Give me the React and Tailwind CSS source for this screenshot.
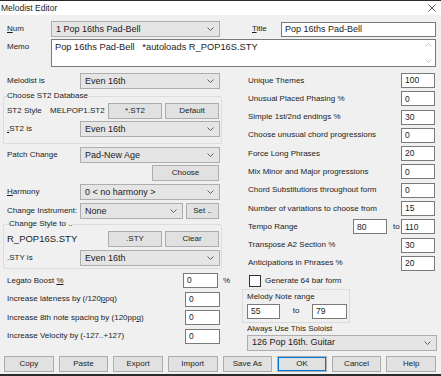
import React from 'react';

function Chevron({ up = false, color = '#606060' }) {
  return (
    <svg width="7" height="4" viewBox="0 0 7 4" className="shrink-0">
      <path d={up ? 'M0.5 3.5 L3.5 0.5 L6.5 3.5' : 'M0.5 0.5 L3.5 3.5 L6.5 0.5'} fill="none" stroke={color} strokeWidth="1" />
    </svg>
  );
}

function Combo({ value, className = '' }) {
  return (
    <div className={`flex h-[16px] items-center justify-between border border-[#adadad] bg-[#e5e5e5] pl-[4px] pr-[5px] text-[9px] leading-none ${className}`}>
      <span>{value}</span>
      <Chevron />
    </div>
  );
}

function Field({ value, className = '' }) {
  return (
    <div className={`flex h-[15px] shrink-0 items-center border border-[#7a7a7a] bg-white pl-[3px] text-[8.5px] leading-none ${className}`}>
      {value}
    </div>
  );
}

function Btn({ children, className = '' }) {
  return (
    <div className={`flex h-[16px] shrink-0 items-center justify-center border border-[#adadad] bg-[#e1e1e1] text-[8px] leading-none ${className}`}>
      {children}
    </div>
  );
}

const rightRows = [
  ['Unique Themes', '100'],
  ['Unusual Placed Phasing %', '0'],
  ['Simple 1st/2nd endings %', '30'],
  ['Choose unusual chord progressions', '0'],
  ['Force Long Phrases', '20'],
  ['Mix Minor and Major progressions', '0'],
  ['Chord Substitutions throughout form', '0'],
  ['Number of variations to choose from', '15'],
  null,
  ['Transpose A2 Section %', '30'],
  ['Anticipations in Phrases %', '20'],
];

const footer = ['Copy', 'Paste', 'Export', 'Import', 'Save As', 'OK', 'Cancel', 'Help'];

export default function App() {
  return (
    <div className="flex h-[376px] w-[441px] flex-col overflow-hidden border-t border-b-2 border-[#2b2b2b] bg-[#f0f0f0] text-[8px] leading-[10px] text-[#1c1c1c] [font-family:'Liberation_Sans',Arial,sans-serif]">
      {/* title bar */}
      <div className="flex h-[14px] items-center justify-between bg-white pl-[1px] pr-[5px]">
        <span className="text-[8.5px]">Melodist Editor</span>
        <svg width="8" height="8" viewBox="0 0 8 8">
          <path d="M0.5 0.5 L7.5 7.5 M7.5 0.5 L0.5 7.5" stroke="#444" strokeWidth="0.9" />
        </svg>
      </div>

      {/* num / title */}
      <div className="mt-[6px] flex h-[16px] items-center pl-[7px]">
        <span className="w-[44px]"><u>N</u>um</span>
        <Combo value="1 Pop 16ths Pad-Bell" className="w-[169px]" />
        <span className="ml-[32px] w-[29px]"><u>T</u>itle</span>
        <Field value="Pop 16ths Pad-Bell" className="w-[155px] text-[9px]" />
      </div>

      {/* memo */}
      <div className="mt-[2px] flex pl-[7px]">
        <span className="w-[44px] pt-[3px]">Memo</span>
        <div className="flex h-[28px] w-[385px] border border-[#7a7a7a] bg-white">
          <div className="flex-1 whitespace-pre pl-[3px] pt-[2px] text-[9.3px] leading-[11px]">Pop 16ths Pad-Bell   *autoloads R_POP16S.STY</div>
          <div className="flex w-[13px] flex-col items-center justify-between py-[3px]">
            <Chevron up color="#c2c2c2" />
            <Chevron color="#c2c2c2" />
          </div>
        </div>
      </div>

      <div className="mt-[6px] flex">
        {/* left column */}
        <div className="flex w-[230px] flex-col pl-[3px]">
          <div className="flex h-[16px] items-center pl-[4px]">
            <span className="w-[73px]">Melodist is</span>
            <Combo value="Even 16th" className="w-[140px]" />
          </div>

          <fieldset className="mt-[2px] w-[219px] rounded-[2px] border border-[#dcdcdc] pb-[6px] pl-[3px] pr-[1px]">
            <legend className="leading-[10px]">Choose ST2 Database</legend>
            <div className="mt-[2px] flex h-[15px] items-center">
              <span className="w-[43px]">ST2 Style</span>
              <span className="w-[58px]">MELPOP1.ST2</span>
              <Btn className="h-[15px] w-[54px]">*.ST2</Btn>
              <Btn className="ml-[3px] h-[15px] w-[54px]">Default</Btn>
            </div>
            <div className="mt-[3px] flex h-[16px] items-center">
              <span className="w-[73px]"><u>.</u>ST2 is</span>
              <Combo value="Even 16th" className="w-[140px]" />
            </div>
          </fieldset>

          <div className="mt-[3px] flex h-[16px] items-center pl-[4px]">
            <span className="w-[73px]">Patch Change</span>
            <Combo value="Pad-New Age" className="w-[140px]" />
          </div>
          <div className="mt-[2px] flex pl-[149px]">
            <Btn className="h-[15px] w-[67px]">Choose</Btn>
          </div>
          <div className="mt-[3px] flex h-[16px] items-center pl-[4px]">
            <span className="w-[73px]"><u>H</u>armony</span>
            <Combo value="0 < no harmony >" className="w-[140px]" />
          </div>
          <div className="mt-[3px] flex h-[16px] items-center pl-[4px]">
            <span className="w-[73px]">Change Instrument:</span>
            <Combo value="None" className="w-[103px]" />
            <Btn className="ml-[3px] w-[33px]">Set ..</Btn>
          </div>

          <fieldset className="w-[219px] rounded-[2px] border border-[#dcdcdc] pb-[2px] pl-[3px] pr-[1px]">
            <legend className="ml-[2px] leading-[10px]">Change Style to ..</legend>
            <div className="mt-[2px] flex h-[15px] items-center">
              <span className="w-[101px] text-[9.5px]">R_POP16S.STY</span>
              <Btn className="h-[15px] w-[54px]">.STY</Btn>
              <Btn className="ml-[3px] h-[15px] w-[54px]">Clear</Btn>
            </div>
            <div className="mt-[4px] flex h-[16px] items-center">
              <span className="w-[73px]">.STY is</span>
              <Combo value="Even 16th" className="w-[140px]" />
            </div>
          </fieldset>

          <div className="mt-[4px] flex h-[15px] items-center pl-[4px]">
            <span className="w-[178px]">Legato Boost <u>%</u></span>
            <Field value="0" className="w-[35px]" />
            <span className="ml-[5px]">%</span>
          </div>
          <div className="mt-[3.5px] flex h-[15px] items-center pl-[4px]">
            <span className="w-[178px]">Increase lateness by (/120<u>p</u>pq)</span>
            <Field value="0" className="w-[35px]" />
          </div>
          <div className="mt-[3.5px] flex h-[15px] items-center pl-[4px]">
            <span className="w-[178px]">Increase 8th note spacing by (120pp<u>q</u>)</span>
            <Field value="0" className="w-[35px]" />
          </div>
          <div className="mt-[3.5px] flex h-[15px] items-center pl-[4px]">
            <span className="w-[178px]">Increase Velocity by (-127..+127)</span>
            <Field value="0" className="w-[35px]" />
          </div>
        </div>

        {/* right column */}
        <div className="ml-[12px] flex w-[196px] flex-col gap-y-[3.3px]">
          {rightRows.map((r, i) =>
            r ? (
              <div key={i} className="flex h-[15px] items-center justify-between pl-[6px] pr-[3px]">
                <span>{r[0]}</span>
                <Field value={r[1]} className="w-[34px]" />
              </div>
            ) : (
              <div key={i} className="flex h-[15px] items-center pl-[6px] pr-[3px]">
                <span className="flex-1">Tempo Range</span>
                <Field value="80" className="w-[34px]" />
                <span className="ml-[6px] w-[8px]">to</span>
                <Field value="110" className="w-[34px]" />
              </div>
            )
          )}
          <div className="flex h-[13px] items-center pl-[7px]">
            <div className="h-[12px] w-[12px] border border-[#333] bg-white" />
            <span className="ml-[4px]">Generate 64 bar form</span>
          </div>
          <div className="-mt-[2px] flex flex-col">
            <div className="h-[34px] w-[108px] border border-[#dcdcdc] pl-[4px] pt-[2px]">
              <div>Melody Note range</div>
              <div className="mt-[2px] flex items-center">
                <Field value="55" className="w-[33px]" />
                <span className="flex w-[32px] justify-center">to</span>
                <Field value="79" className="w-[35px]" />
              </div>
            </div>
            <div className="mt-[1px] pl-[5px]">Always Use This Soloist</div>
            <Combo value="126 Pop 16th. Guitar" className="ml-[5px] mt-[1px] w-[190px]" />
          </div>
        </div>
      </div>

      {/* footer */}
      <div className="mt-auto grid grid-cols-8 gap-x-[5px] pb-[2px] pl-[4px] pr-[5px]">
        {footer.map((b) =>
          b === 'OK' ? (
            <Btn key={b} className="border-[#0078d7] shadow-[inset_0_0_0_1px_#0078d7]">{b}</Btn>
          ) : (
            <Btn key={b}>{b}</Btn>
          )
        )}
      </div>
    </div>
  );
}
